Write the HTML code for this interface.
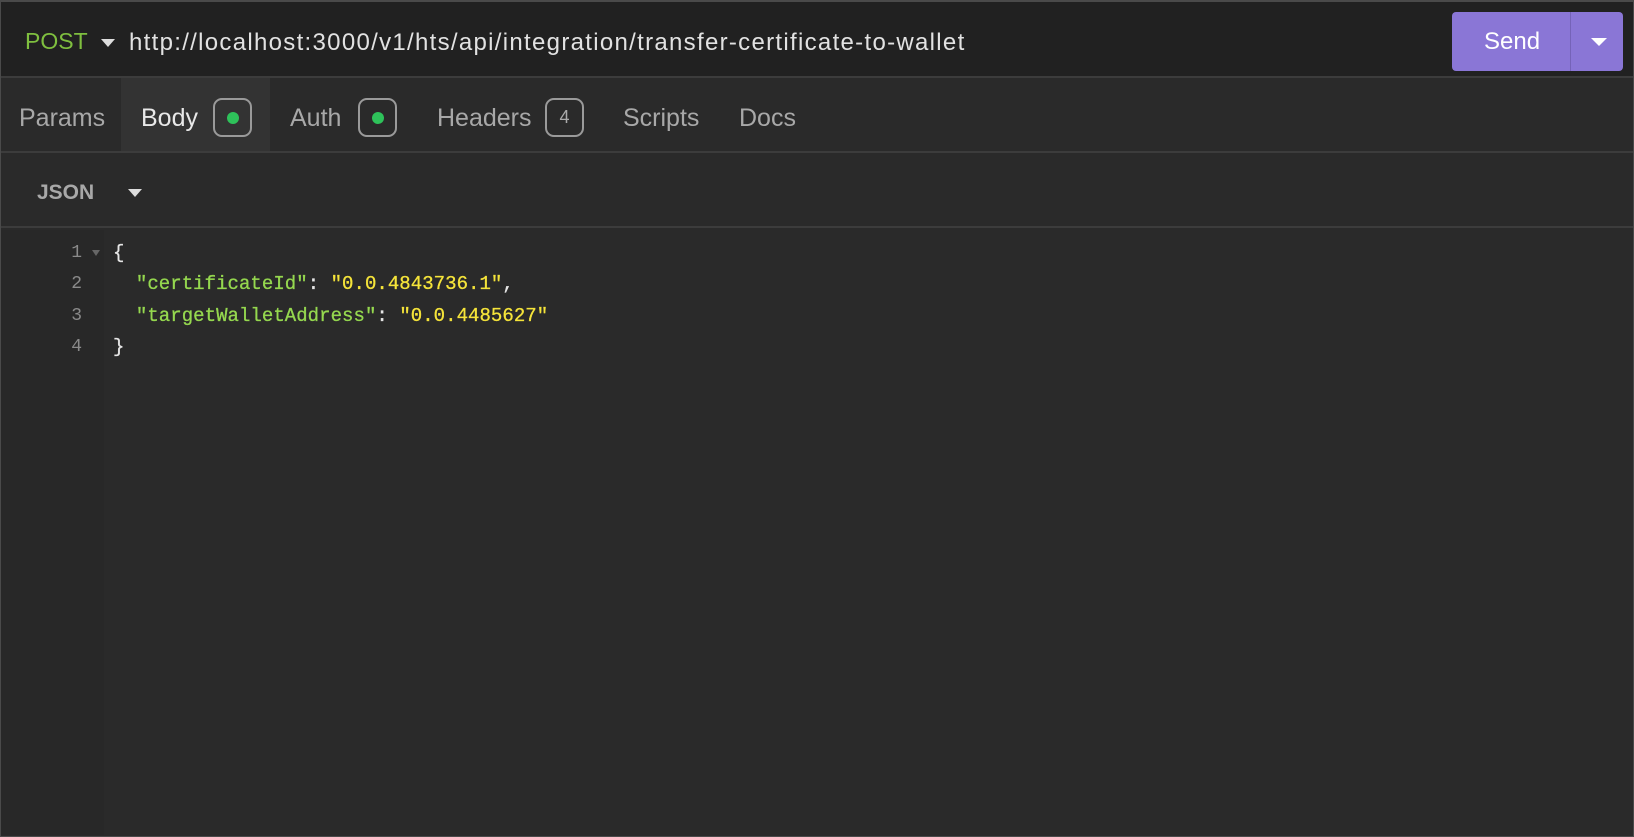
<!DOCTYPE html>
<html><head><meta charset="utf-8"><style>
*{margin:0;padding:0;box-sizing:border-box}
body{width:1634px;height:837px;background:#2a2a2a;font-family:"Liberation Sans",sans-serif;overflow:hidden;position:relative}
.frame{position:absolute;left:0;top:0;width:1634px;height:837px;border:1px solid #4a4a4a;border-top:2px solid #4a4a4a}
.hdr{position:absolute;left:0;top:0;width:1634px;height:78px;background:#212121;border-bottom:2px solid #3c3c3c}
.abs{position:absolute;white-space:nowrap}
.tri{position:absolute;width:0;height:0;border-left:7px solid transparent;border-right:7px solid transparent;border-top:8px solid #ddd}
.send{position:absolute;left:1452px;top:12px;width:171px;height:59px;background:#8a76d6;border-radius:4px}
.tabs{position:absolute;left:0;top:78px;width:1634px;height:75px;border-bottom:2px solid #3c3c3c}
.tab{position:absolute;top:4px;height:73px;line-height:73px;font-size:25px;color:#a8a8a8}
.badge{position:absolute;top:20px;width:39px;height:39px;border:2px solid #9a9a9a;border-radius:9px}
.dot{position:absolute;left:12px;top:12px;width:12px;height:12px;border-radius:50%;background:#2ec25a}
.json{position:absolute;left:0;top:153px;width:1634px;height:75px;border-bottom:2px solid #3c3c3c}
.gut{position:absolute;left:0;top:230px;width:104px;height:605px;background:#282828}
.ln{position:absolute;left:0;width:82px;text-align:right;font-family:"Liberation Mono",monospace;font-size:18px;color:#8a8a8a}
.code{position:absolute;left:113px;font-family:"Liberation Mono",monospace;font-size:19px;letter-spacing:0.05px;color:#e6e6e6;white-space:pre;-webkit-text-stroke:0.3px}
.k{color:#95d84f}.s{color:#f5e43a}
</style></head><body>
<div class="hdr">
<div class="abs" style="left:25px;top:28px;font-size:23px;color:#7fbf3f">POST</div>
<div class="tri" style="left:101px;top:39px"></div>
<div class="abs" style="left:129px;top:29px;font-size:24px;letter-spacing:1.3px;color:#e2e2e2">http://localhost:3000/v1/hts/api/integration/transfer-certificate-to-wallet</div>
<div class="send">
<div class="abs" style="left:32px;top:16px;font-size:24px;color:#fff">Send</div>
<div style="position:absolute;left:118px;top:0;width:1px;height:59px;background:#7563b8"></div>
<div class="tri" style="left:139px;top:26px;border-top-color:#fff;border-left-width:8px;border-right-width:8px"></div>
</div>
</div>
<div class="tabs">
<div style="position:absolute;left:121px;top:0;width:149px;height:73px;background:#333"></div>
<div class="tab" style="left:19px">Params</div>
<div class="tab" style="left:141px;color:#e8e8e8">Body</div>
<div class="badge" style="left:213px"><div class="dot"></div></div>
<div class="tab" style="left:290px">Auth</div>
<div class="badge" style="left:358px"><div class="dot"></div></div>
<div class="tab" style="left:437px">Headers</div>
<div class="badge" style="left:545px;font-size:18px;color:#aaa;text-align:center;line-height:35px">4</div>
<div class="tab" style="left:623px">Scripts</div>
<div class="tab" style="left:739px">Docs</div>
</div>
<div class="json">
<div class="abs" style="left:37px;top:28px;font-size:21px;font-weight:bold;color:#a8a8a8">JSON</div>
<div class="tri" style="left:128px;top:36px"></div>
</div>
<div class="gut"></div>
<div class="ln" style="top:243px">1</div>
<div class="tri" style="left:92px;top:250px;border-left-width:4px;border-right-width:4px;border-top:6px solid #666"></div>
<div class="ln" style="top:274px">2</div>
<div class="ln" style="top:306px">3</div>
<div class="ln" style="top:337px">4</div>
<div class="code" style="top:242px">{</div>
<div class="code" style="top:273px">  <span class="k">"certificateId"</span>: <span class="s">"0.0.4843736.1"</span>,</div>
<div class="code" style="top:305px">  <span class="k">"targetWalletAddress"</span>: <span class="s">"0.0.4485627"</span></div>
<div class="code" style="top:336px">}</div>
<div class="frame"></div>
</body></html>
